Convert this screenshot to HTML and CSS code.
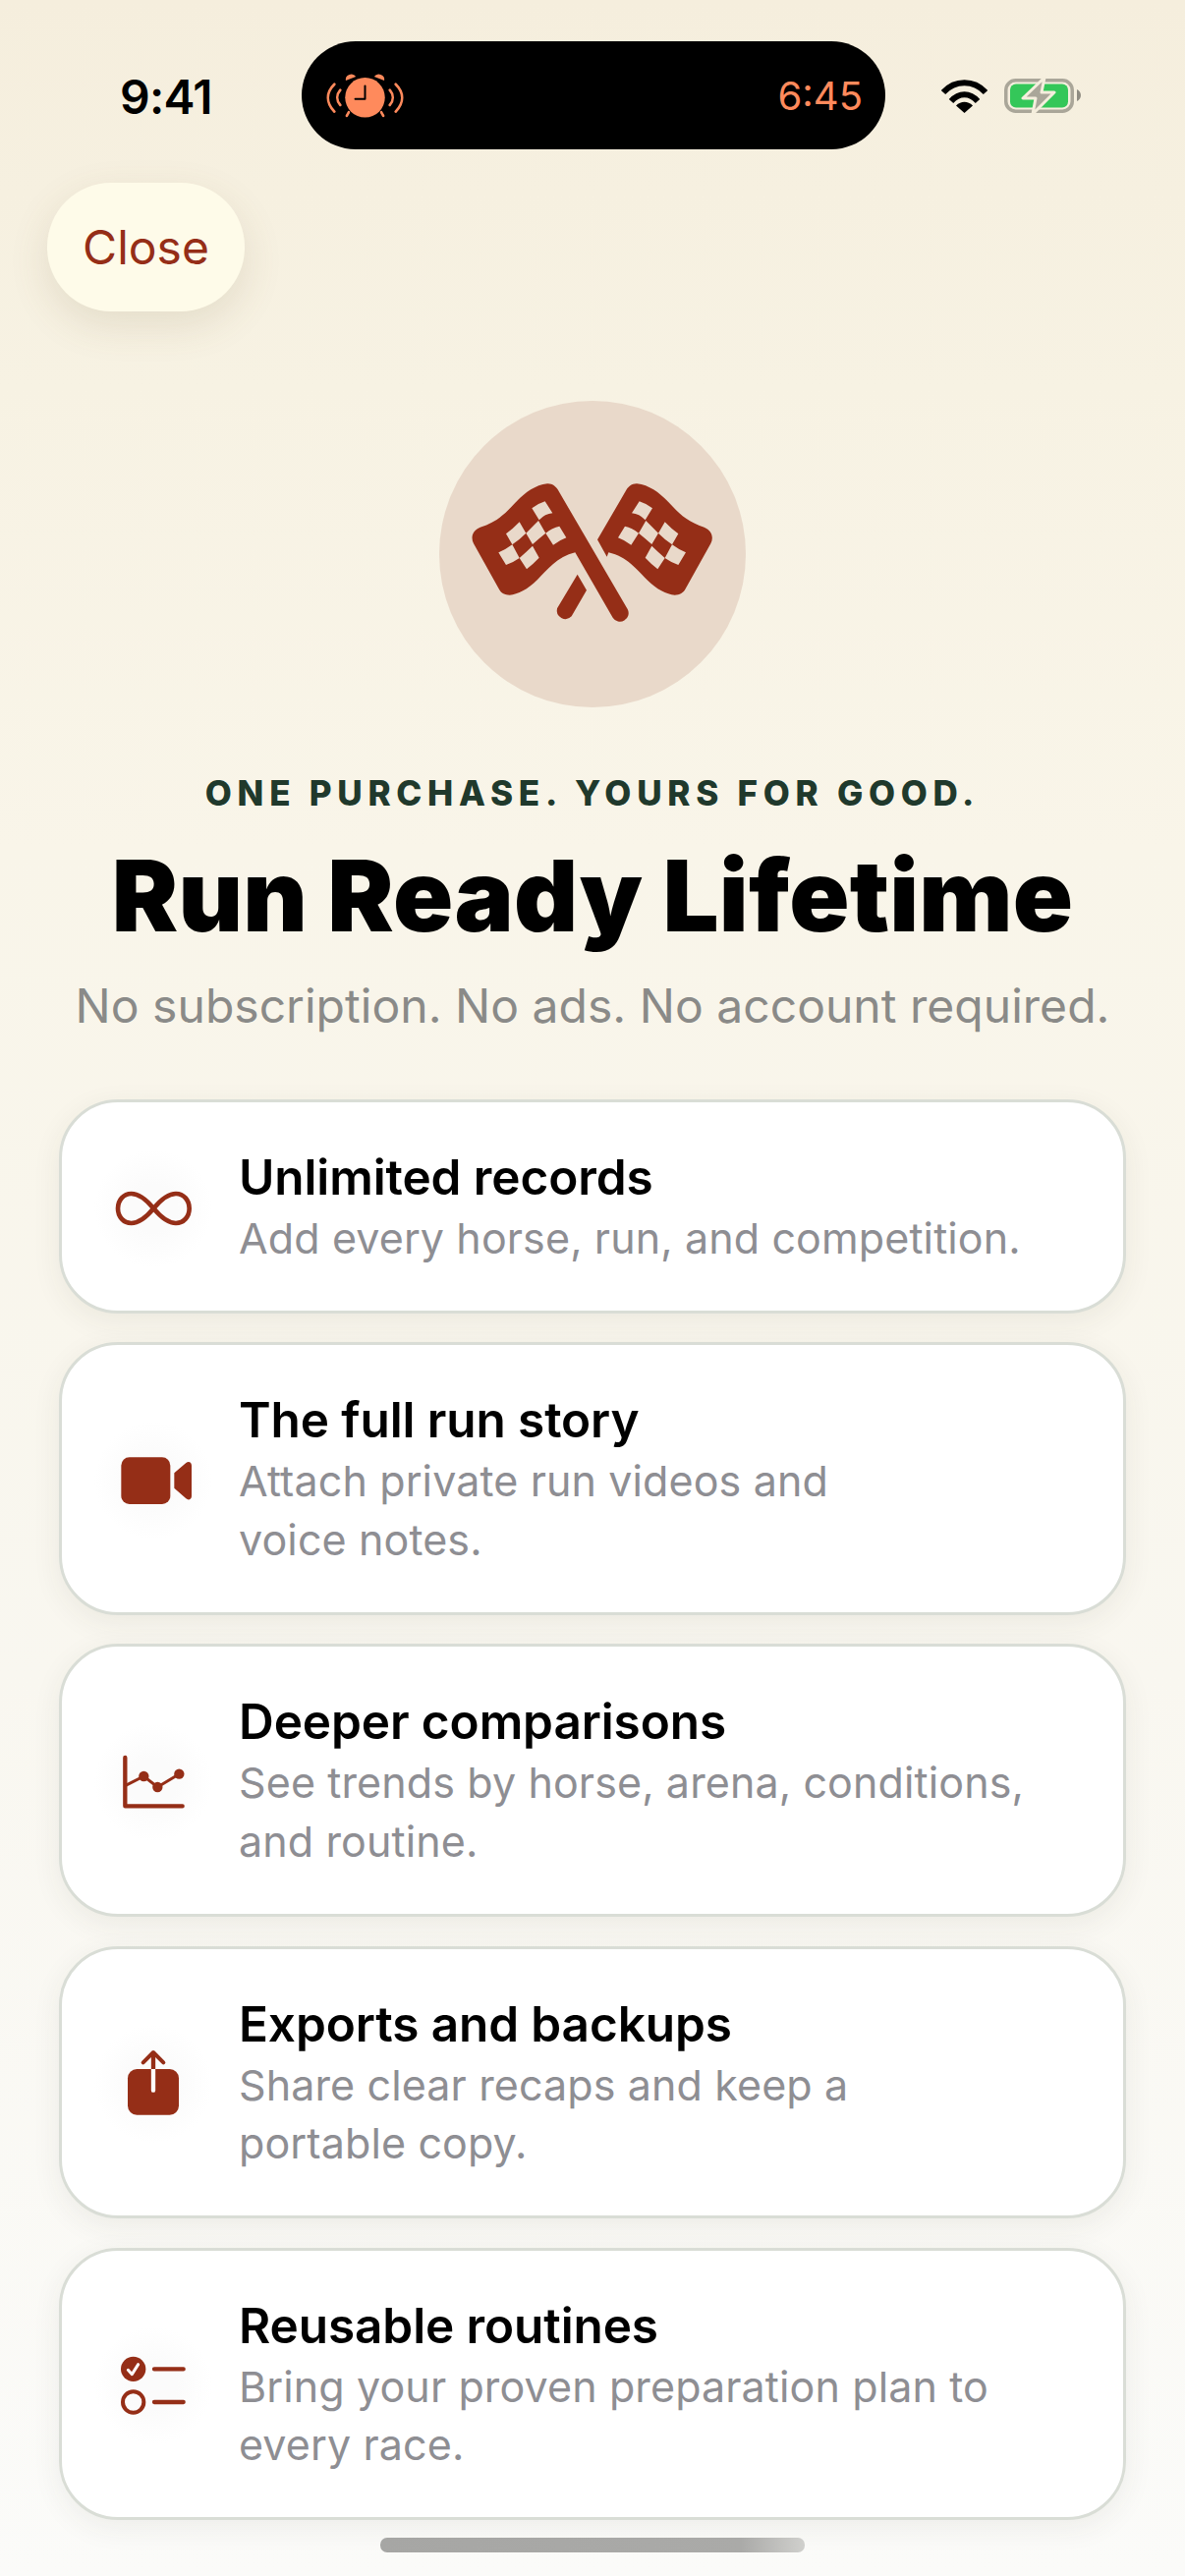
FILE: index.html
```html
<!DOCTYPE html>
<html lang="en">
<head>
<meta charset="utf-8">
<title>Run Ready Lifetime</title>
<link rel="stylesheet" href="styles.css">
</head>
<body>
<div class="screen">
  <header class="status">
    <span class="clock">9:41</span>
    <div class="island">
      <svg class="alarm" viewBox="90 155 250 150" width="83" height="50" fill="#ff8a5c">
        <circle cx="215" cy="237" r="61"/>
        <path d="M156 185a17 17 0 0 1 31-12z M274 185a17 17 0 0 0-31-12z"/>
        <path d="M165 282l-6 11M265 282l6 11" stroke="#ff8a5c" stroke-width="8" stroke-linecap="round"/>
        <path d="M215 201v40h-30" fill="none" stroke="#000" stroke-width="6" stroke-linecap="round" stroke-linejoin="round"/>
        <path d="M121 196c-26 26-26 56 0 84M139 214c-12 14-12 32 0 46M309 196c26 26 26 56 0 84M291 214c12 14 12 32 0 46" fill="none" stroke="#ff8a5c" stroke-width="8" stroke-linecap="round"/>
      </svg>
      <span class="timer">6:45</span>
    </div>
    <div class="indicators">
      <svg width="47" height="35" viewBox="0 0 47 35">
        <path d="M2 14C14 1 33 1 45 14" fill="none" stroke="#000" stroke-width="6"/>
        <path d="M10 23C18 14 29 14 37 23" fill="none" stroke="#000" stroke-width="6"/>
        <path d="M15 27.500C20 22.500 27 22.500 32 27.500L23.500 35Z" fill="#000"/>
      </svg>
      <svg width="78" height="39" viewBox="0 0 78 39">
        <rect x="1.750" y="3.750" width="67.500" height="31.500" rx="10" fill="none" stroke="#aaa699" stroke-width="3.500"/>
        <rect x="6" y="7.500" width="59" height="24" rx="6" fill="#34c759"/>
        <path d="M74 13c2.500 1 4 3.500 4 6s-1.500 5-4 6z" fill="#8f8c82"/>
        <path d="M41 1L19 22H32L29 38L51 16H38Z" fill="#aaa699" stroke="#f5eedd" stroke-width="3" stroke-linejoin="round"/>
      </svg>
    </div>
  </header>

  <button class="close" type="button">Close</button>

  <section class="hero">
    <div class="badge">
      <svg width="312" height="312" viewBox="80 54 936 936" fill="#952e17">
        <g>
          <path d="M442 325L655 690A26 26 0 0 1 610 716L495 517C440 530 410 570 380 600C350 630 320 645 295 647C280 647 268 640 262 628L185 490C175 470 182 450 205 440C250 425 275 405 300 378C330 345 365 312 410 307C425 306 435 315 442 325Z"/>
          <path class="check" d="M363 382Q383 367 403 361L426 397Q403 399 385 418ZM284 460Q306 444 325 424L345 458Q325 478 303 493ZM345 458Q365 438 383 420L405 458Q385 474 365 492ZM405 458Q425 441 447 437L468 472Q447 480 428 494ZM261 517Q283 508 303 493L325 534Q305 548 284 555ZM325 534Q345 516 365 497L385 533Q367 552 347 568Z"/>
        </g>
        <path d="M502 584L530 632L484 712A26 26 0 0 1 440 688Z"/>
        <path d="M652 325C659 315 669 306 684 307C729 312 764 345 794 378C819 405 844 425 889 440C912 450 919 470 909 490L832 628C826 640 814 647 799 647C774 645 744 630 714 600C684 570 654 530 597 517L592 530L563 478Z"/>
        <g transform="matrix(-1 0 0 1 1094 0)">
          <path class="check" d="M363 382Q383 367 403 361L426 397Q403 399 385 418ZM284 460Q306 444 325 424L345 458Q325 478 303 493ZM345 458Q365 438 383 420L405 458Q385 474 365 492ZM405 458Q425 441 447 437L468 472Q447 480 428 494ZM261 517Q283 508 303 493L325 534Q305 548 284 555ZM325 534Q345 516 365 497L385 533Q367 552 347 568Z"/>
        </g>
      </svg>
    </div>
    <p class="eyebrow">ONE PURCHASE. YOURS FOR GOOD.</p>
    <h1 class="title">Run Ready Lifetime</h1>
    <p class="subtitle">No subscription. No ads. No account required.</p>
  </section>

  <section class="features">
    <article class="card">
      <svg class="icon" viewBox="168 205 360 360">
        <path d="M349 385C320 350 300 340 281 340C257 340 240 360 240 385C240 410 257 430 281 430C300 430 320 420 349 385C378 350 398 340 417 340C441 340 458 360 458 385C458 410 441 430 417 430C398 430 378 420 349 385Z" fill="none" stroke="#952e17" stroke-width="14"/>
      </svg>
      <div class="copy">
        <h2>Unlimited records</h2>
        <p>Add every horse, run, and competition.</p>
      </div>
    </article>
    <article class="card">
      <svg class="icon" viewBox="168 258 360 360">
        <rect x="250" y="367" width="150" height="143" rx="25" fill="#952e17"/>
        <path d="M412 415L448 384C456 377 465 382 465 392V485C465 495 456 500 448 493L412 461Z" fill="#952e17"/>
      </svg>
      <div class="copy">
        <h2>The full run story</h2>
        <p>Attach private run videos and<br>voice notes.</p>
      </div>
    </article>
    <article class="card">
      <svg class="icon" viewBox="168 159 360 360">
        <path d="M262 264V412H437" fill="none" stroke="#952e17" stroke-width="13" stroke-linecap="round" stroke-linejoin="round"/>
        <path d="M262 350L319 321L361 354L427 314" fill="none" stroke="#952e17" stroke-width="9"/>
        <circle cx="319" cy="321" r="15.500" fill="#952e17"/>
        <circle cx="361" cy="354" r="15.500" fill="#952e17"/>
        <circle cx="427" cy="314" r="15.500" fill="#952e17"/>
      </svg>
      <div class="copy">
        <h2>Deeper comparisons</h2>
        <p>See trends by horse, arena, conditions,<br>and routine.</p>
      </div>
    </article>
    <article class="card">
      <svg class="icon" viewBox="168 120 360 360">
        <rect x="270" y="255" width="156" height="140" rx="28" fill="#952e17"/>
        <path d="M348 320V206" fill="none" stroke="#fff" stroke-width="13" stroke-linecap="round"/>
        <path d="M348 255V206" fill="none" stroke="#952e17" stroke-width="13"/>
        <path d="M317 235L348 204L379 235" fill="none" stroke="#952e17" stroke-width="12" stroke-linecap="round" stroke-linejoin="round"/>
      </svg>
      <div class="copy">
        <h2>Exports and backups</h2>
        <p>Share clear recaps and keep a<br>portable copy.</p>
      </div>
    </article>
    <article class="card">
      <svg class="icon" viewBox="168 135 360 360">
        <circle cx="287" cy="265" r="38" fill="#952e17"/>
        <path d="M271 268L283 281L302 251" fill="none" stroke="#fff" stroke-width="9" stroke-linecap="round" stroke-linejoin="round"/>
        <circle cx="287" cy="366" r="32" fill="none" stroke="#952e17" stroke-width="12"/>
        <path d="M351 265H440M351 366H440" fill="none" stroke="#952e17" stroke-width="13" stroke-linecap="round"/>
      </svg>
      <div class="copy">
        <h2>Reusable routines</h2>
        <p>Bring your proven preparation plan to<br>every race.</p>
      </div>
    </article>
  </section>

  <div class="home-indicator"></div>
</div>
</body>
</html>
```
FILE: styles.css
```css
* { box-sizing: border-box; }
html, body { margin: 0; padding: 0; }
body { font-family: Inter, "Liberation Sans", sans-serif; }
.screen {
  width: 1206px;
  height: 2622px;
  overflow: hidden;
  display: flex;
  flex-direction: column;
  background: linear-gradient(180deg, #f5eedd 0%, #f7f2e3 15%, #f9f5e9 33%, #f9f7f0 65%, #fbfbf9 100%);
}
.status {
  height: 152px;
  padding: 42px 106px 0 122px;
  display: flex;
  align-items: flex-start;
}
.clock { width: 185px; margin-top: 29px; font-size: 48px; line-height: 56px; font-weight: 600; color: #000; letter-spacing: -0.700px; }
.island {
  width: 594px;
  height: 110px;
  border-radius: 55px;
  background: #000;
  padding: 0 23px 0 23px;
  display: flex;
  align-items: center;
  justify-content: space-between;
}
.timer { font-size: 40px; font-weight: 400; color: #ff8a5c; }
.indicators { display: flex; align-items: center; gap: 17px; margin: 36px 0 0 57px; }
.close {
  width: 201px;
  height: 131px;
  margin: 34px 0 0 48px;
  border: 0;
  border-radius: 65px;
  background: #fefbe9;
  color: #952e17;
  font: 400 48px Inter, "Liberation Sans", sans-serif;
  box-shadow: 0 14px 40px rgba(120, 100, 60, 0.14);
  padding: 0;
}
.hero { display: flex; flex-direction: column; align-items: center; }
.badge { width: 312px; height: 312px; margin-top: 91px; border-radius: 50%; background: #e9d9ca; }
.check { fill: #e9d9ca; }
.eyebrow { margin: 65px 0 0; font-size: 35px; line-height: 44px; font-weight: 800; letter-spacing: 5.750px; color: #20392c; }
.title { margin: 28px 0 0; font-size: 101px; line-height: 108px; font-weight: 900; letter-spacing: 0.200px; color: #000; }
.subtitle { margin: 29px 0 0; font-size: 48px; line-height: 60px; font-weight: 400; letter-spacing: 0.030px; color: #8a8a88; }
.features { display: flex; flex-direction: column; gap: 29.700px; padding: 0 60px; margin-top: 65px; }
.card {
  display: flex;
  align-items: center;
  gap: 27px;
  padding: 47px 33px 43px;
  border: 3px solid #d9ddd6;
  border-radius: 60px;
  background: #fff;
  box-shadow: 0 8px 30px rgba(60, 60, 40, 0.07);
}
.icon { width: 120px; height: 120px; flex: none; background: radial-gradient(circle closest-side, #fbfbfb 40%, rgba(255, 255, 255, 0) 100%); }
.copy h2 { margin: 0; font-size: 49.500px; line-height: 59px; font-weight: 600; color: #000; letter-spacing: -0.100px; }
.copy p { margin: 3px 0 0; font-size: 43px; line-height: 59.700px; font-weight: 400; letter-spacing: 0.120px; color: #8e8e93; }
.home-indicator { width: 432px; height: 15px; margin: 18px auto 0; border-radius: 7px; background: linear-gradient(90deg, #a6a6a4 0%, #aaaaa8 85%, #d0d0cd 100%); }
```
